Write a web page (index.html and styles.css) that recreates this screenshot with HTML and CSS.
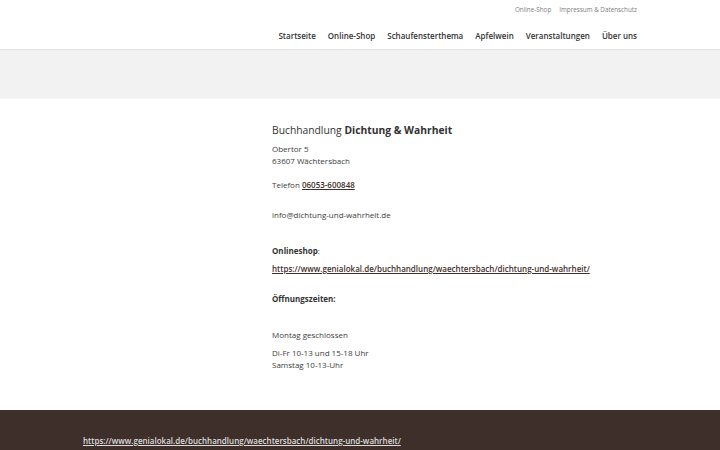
FILE: index.html
```html
<!DOCTYPE html>
<html lang="de">
<head>
<meta charset="utf-8">
<title>Buchhandlung Dichtung &amp; Wahrheit</title>
<link rel="stylesheet" href="styles.css">
</head>
<body>
<header class="header">
  <div class="container">
    <div class="meta">
      <a href="#">Online-Shop</a>
      <a href="#">Impressum &amp; Datenschutz</a>
    </div>
    <nav class="nav">
      <a href="#">Startseite</a>
      <a href="#">Online-Shop</a>
      <a href="#">Schaufensterthema</a>
      <a href="#">Apfelwein</a>
      <a href="#">Veranstaltungen</a>
      <a href="#">Über uns</a>
    </nav>
  </div>
</header>
<div class="band"></div>
<main class="main">
  <div class="container grid">
    <div class="spacer"></div>
    <div class="content">
      <h1 class="title">Buchhandlung <strong>Dichtung &amp; Wahrheit</strong></h1>
      <p class="address">Obertor 5<br>63607 Wächtersbach</p>
      <p>Telefon <a class="link" href="#">06053-600848</a><br><br></p>
      <p>info@dichtung-und-wahrheit.de</p>
      <p>&nbsp;</p>
      <p><strong>Onlineshop</strong>:</p>
      <p><a class="link" href="#">https://www.genialokal.de/buchhandlung/waechtersbach/dichtung-und-wahrheit/</a><br><br></p>
      <p><strong>Öffnungszeiten:</strong></p>
      <p>&nbsp;</p>
      <p>Montag geschlossen</p>
      <p>Di-Fr 10-13 und 15-18 Uhr<br>Samstag 10-13-Uhr</p>
    </div>
  </div>
</main>
<footer class="footer">
  <div class="container footrow">
    <a class="footlink" href="#">https://www.genialokal.de/buchhandlung/waechtersbach/dichtung-und-wahrheit/</a>
  </div>
</footer>
</body>
</html>
```
FILE: styles.css
```css
html, body {
  margin: 0;
  padding: 0;
  background: #ffffff;
  font-family: "Open Sans", "Liberation Sans", sans-serif;
  color: #3c3c3c;
}
.container {
  padding: 0 83px 0 83px;
}
.header {
  height: 50px;
  border-bottom: 1px solid #e4e4e4;
  box-sizing: border-box;
}
.meta {
  height: 19px;
  display: flex;
  justify-content: flex-end;
  align-items: center;
  gap: 8px;
  font-size: 6.3px;
}
.meta a {
  color: #808080;
  text-decoration: none;
}
.nav {
  height: 32px;
  display: flex;
  justify-content: flex-end;
  align-items: center;
  gap: 12px;
  font-size: 8px;
  font-weight: 600;
}
.nav a {
  color: #333333;
  text-decoration: none;
}
.band {
  height: 48px;
  background: #f2f2f2;
  border-bottom: 1px solid #f7f7f7;
}
.main {
  height: 311px;
  padding-top: 24px;
  box-sizing: border-box;
}
.grid {
  display: grid;
  grid-template-columns: 189px 1fr;
}
.title {
  margin: 0 0 5px 0;
  font-size: 10.3px;
  line-height: 15px;
  font-weight: 400;
  color: #333333;
}
.title strong {
  font-weight: 700;
}
.content p {
  margin: 0 0 6px 0;
  font-size: 8px;
  line-height: 12px;
  font-weight: 500;
}
.content p.address {
  margin-bottom: 12px;
}
.content strong {
  font-weight: 700;
  color: #333333;
}
.link {
  color: #3f2f2a;
  font-weight: 600;
  text-decoration: underline;
}
.footer {
  background: #3f2f2a;
  height: 40px;
  padding-top: 25px;
  box-sizing: border-box;
}
.footrow {
  font-size: 8px;
  line-height: 12px;
}
.footlink {
  font-weight: 600;
  color: #dddddd;
  text-decoration: underline;
}
```
